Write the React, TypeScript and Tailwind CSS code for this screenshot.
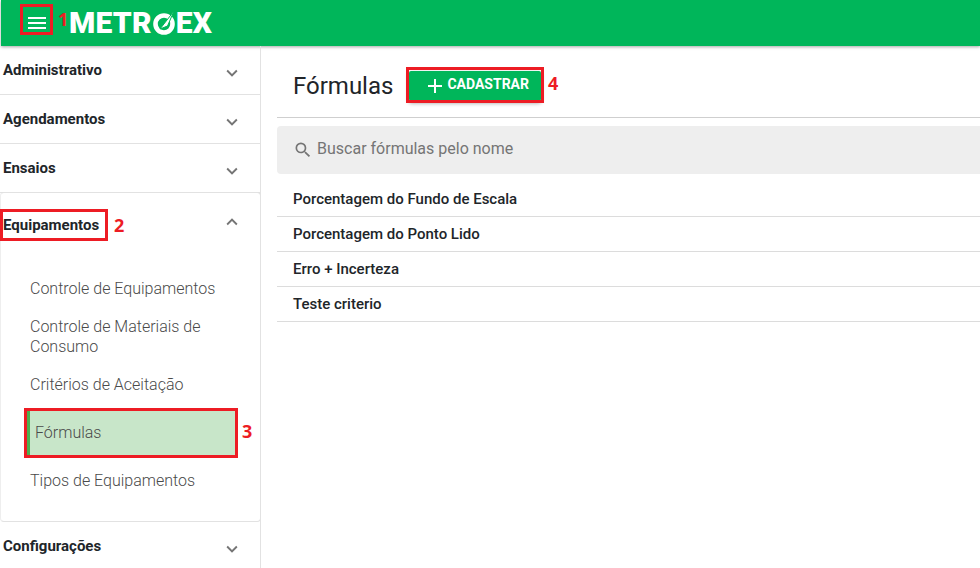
import { MdAdd, MdExpandLess, MdExpandMore, MdMenu, MdSearch } from "react-icons/md"

function Section({ label }: { label: string }) {
  return (
    <div className="flex h-[49px] items-start justify-between border-b border-[#e2e2e2] pl-[3px] pr-[17px]">
      <span className="mt-[15px] text-[15px] font-bold leading-[18px] text-[#212529]">{label}</span>
      <MdExpandMore className="mt-[16px] h-[22px] w-[22px] text-[#757575]" />
    </div>
  )
}

function Annotation({ n, className }: { n: string; className: string }) {
  return (
    <span className={`absolute font-['Open_Sans',sans-serif] text-[18px] font-bold leading-[20px] text-[#ed1c24] ${className}`}>
      {n}
    </span>
  )
}

const formulas = ["Porcentagem do Fundo de Escala", "Porcentagem do Ponto Lido", "Erro + Incerteza", "Teste criterio"]

export default function App() {
  return (
    <div className="relative h-[568px] w-[980px] overflow-hidden bg-white font-['Roboto',sans-serif]">
      <header className="ml-[1px] flex h-[46px] items-center bg-[#00b65a] pl-[24px] shadow-[0_1px_3px_rgba(0,0,0,0.35)]">
        <MdMenu className="h-[24px] w-[24px] text-white" />
        <div className="ml-[20px] flex items-center text-[30px] font-black leading-none tracking-[0.2px] text-white">
          <span>METR</span>
          <svg viewBox="0 0 24 24" className="h-[24px] w-[24px]">
            <circle cx="12" cy="13" r="8.5" fill="none" stroke="white" strokeWidth="4.6" />
            <path d="M8 18 L22 0 L15.5 15 Z" fill="white" stroke="#00b65a" strokeWidth="1" />
          </svg>
          <span>EX</span>
        </div>
      </header>

      <div className="flex">
        <aside className="h-[522px] w-[261px] shrink-0 border-r border-[#e2e2e2]">
          <Section label="Administrativo" />
          <Section label="Agendamentos" />
          <Section label="Ensaios" />

          <div className="-mr-[1px] -mt-[1px] h-[330px] rounded-[4px] border border-[#e2e2e2] border-l-[#eeeeee]">
            <div className="flex items-start justify-between pl-[2px] pr-[17px]">
              <span className="mt-[23px] text-[15px] font-bold leading-[18px] text-[#212529]">Equipamentos</span>
              <MdExpandLess className="mt-[18px] h-[22px] w-[22px] text-[#757575]" />
            </div>
            <nav className="mt-[45px] flex flex-col pl-[29px] pr-[40px] text-[16px] font-light leading-[20px] text-[#4a4a4a]">
              <a>Controle de Equipamentos</a>
              <a className="mt-[18px]">Controle de Materiais de Consumo</a>
              <a className="mt-[18px]">Critérios de Aceitação</a>
              <a className="-ml-[3px] mt-[16px] flex h-[44px] w-[208px] items-center border-l-[3px] border-[#4caf50] bg-[#c8e6c9] pl-[5px]">Fórmulas</a>
              <a className="mt-[16px]">Tipos de Equipamentos</a>
            </nav>
          </div>

          <Section label="Configurações" />
        </aside>

        <main className="min-w-0 flex-1 pl-[16px]">
          <div className="flex h-[72px] items-center border-b border-[#cfcfcf] pl-[16px] pt-[8px]">
            <h1 className="text-[24px] font-normal leading-[32px] text-[#212529]">Fórmulas</h1>
            <button className="ml-[16px] flex h-[30px] w-[132px] items-center rounded-[2px] bg-[#00b65a] pl-[14px] text-[14px] font-bold text-white shadow-[0_2px_4px_rgba(0,0,0,0.4)]">
              <MdAdd className="h-[24px] w-[24px]" />
              <span className="-mt-[2px]">CADASTRAR</span>
            </button>
          </div>
          <div className="mt-[8px] flex h-[48px] items-center gap-[4px] rounded-l-[4px] bg-[#eeeeee] pl-[16px] text-[16px] text-[#757575]">
            <MdSearch className="h-[20px] w-[20px]" />
            <span className="-mt-[2px]">Buscar fórmulas pelo nome</span>
          </div>
          <ul className="mt-[8px]">
            {formulas.map((t) => (
              <li key={t} className="flex h-[35px] items-center border-b border-[#dcdcdc] pl-[16px] text-[15px] font-medium text-[#212529]">
                {t}
              </li>
            ))}
          </ul>
        </main>
      </div>

      {/* red callouts over the screenshot */}
      <div className="absolute left-[20px] top-[4px] h-[31px] w-[33px] border-[3px] border-[#ed1c24]" />
      <div className="absolute left-0 top-[209px] h-[32px] w-[108px] border-[3px] border-[#ed1c24]" />
      <div className="absolute left-[24px] top-[408px] h-[50px] w-[214px] border-[3px] border-[#ed1c24]" />
      <div className="absolute left-[406px] top-[67px] h-[36px] w-[138px] border-[3px] border-[#ed1c24]" />
      <Annotation n="1" className="left-[58px] top-[9px]" />
      <Annotation n="2" className="left-[114px] top-[215px]" />
      <Annotation n="3" className="left-[242px] top-[421px]" />
      <Annotation n="4" className="left-[548px] top-[73px]" />
    </div>
  )
}
